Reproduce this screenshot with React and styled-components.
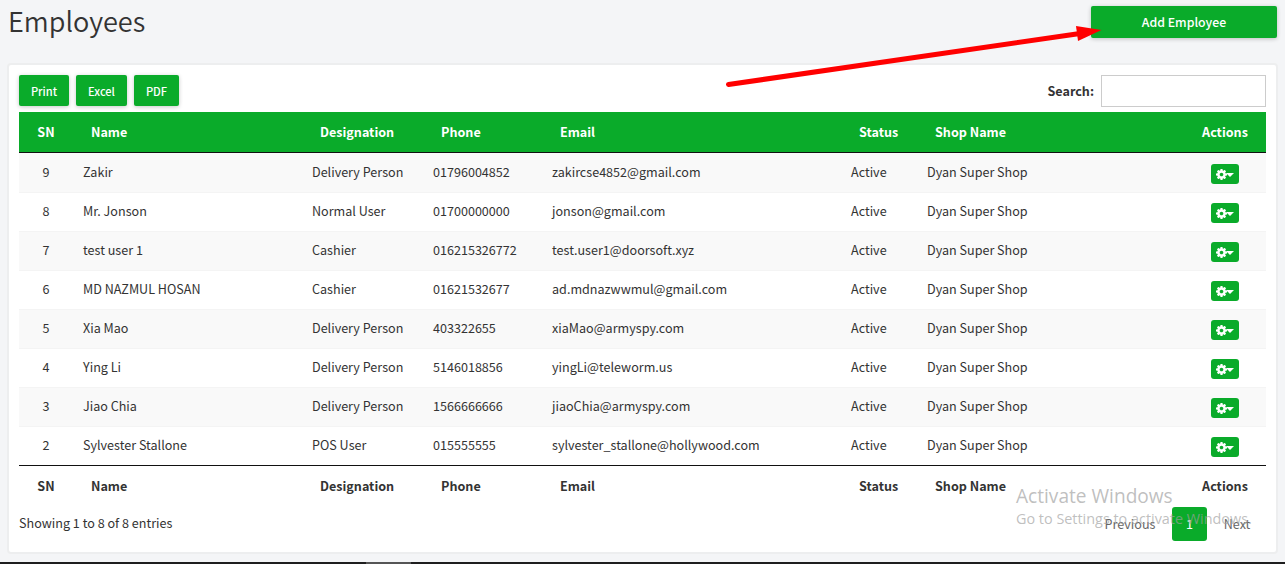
import React from "react";
import styled, { createGlobalStyle } from "styled-components";

const green = "#0aab2a";

const GlobalStyle = createGlobalStyle`
  *, *::before, *::after { box-sizing: border-box; }
  body {
    margin: 0;
    overflow: hidden;
    background: #f4f5f7;
    color: #333;
    font-family: "Noto Sans CJK JP", "Noto Sans", sans-serif;
    font-size: 12.58px;
    line-height: 20px;
  }
`;

const Page = styled.div`
  position: relative;
  display: flex;
  flex-direction: column;
  height: 564px;
`;

const Header = styled.header`
  display: flex;
  justify-content: space-between;
  align-items: flex-start;
  height: 63px;
  padding: 6px 8px 0 8px;
`;

const Title = styled.h1`
  margin: -2px 0 0;
  font-size: 27.1px;
  font-weight: 350;
  line-height: 34px;
  white-space: nowrap;
`;

const Button = styled.button`
  border: 0;
  padding: 0;
  border-radius: 2px;
  background: ${green};
  color: #fff;
  font-family: inherit;
  font-size: ${(p) => p.$size || "11.1px"};
  font-weight: 500;
  line-height: ${(p) => p.$height}px;
  width: ${(p) => p.$width}px;
  height: ${(p) => p.$height}px;
  box-shadow: 0 1px 4px rgba(0, 0, 0, 0.22);
`;

const ExportButton = styled(Button)`
  padding-top: 1px;
  line-height: 30px;
`;

const Card = styled.main`
  display: flex;
  flex-direction: column;
  height: 491px;
  margin: 0 7px;
  padding: 10px 10px 0;
  border: 2px solid #edeeef;
  border-radius: 4px;
  background: #fff;
`;

const Toolbar = styled.div`
  display: flex;
  justify-content: space-between;
  align-items: flex-start;
  height: 37px;
`;

const ButtonGroup = styled.div`
  display: flex;
  gap: 7px;
`;

const Search = styled.label`
  display: flex;
  align-items: center;
  gap: 7px;
  font-weight: 700;
`;

const SearchInput = styled.input`
  width: 165px;
  height: 32px;
  padding: 5px;
  border: 1px solid #ccc;
  background: #fff;
  outline: 0;
`;

const Table = styled.table`
  width: 1247px;
  border-collapse: separate;
  border-spacing: 0;
  table-layout: fixed;
`;

const HeadCell = styled.th`
  height: 41px;
  padding: ${(p) => (p.$center ? "0" : "0 16px")};
  border-bottom: 1px solid #111;
  background: ${green};
  color: #fff;
  font-weight: 700;
  text-align: ${(p) => (p.$center ? "center" : "left")};

  &:first-child {
    padding-right: 2px;
  }
`;

const FootCell = styled.th`
  height: 42px;
  padding: ${(p) => (p.$center ? "0 0 2px" : "0 16px 2px")};
  border-top: 1px solid #111;
  font-weight: 700;
  text-align: ${(p) => (p.$center ? "center" : "left")};

  &:first-child {
    padding-right: 2px;
  }
`;

const Row = styled.tr`
  background: ${(p) => (p.$odd ? "#f9f9f9" : "#fff")};
`;

const Cell = styled.td`
  height: 39px;
  padding: 0 8px 2px;
  border-top: 1px solid ${(p) => (p.$first ? "#f9f9f9" : "#f4f4f4")};
  text-align: ${(p) => (p.$center ? "center" : "left")};
  white-space: nowrap;

  &:first-child {
    padding-right: 10px;
  }
`;

const ActionButton = styled.button`
  display: flex;
  align-items: center;
  width: 28px;
  height: 20px;
  margin: 4px auto 0;
  padding: 0 5px;
  border: 0;
  border-radius: 3px;
  background: ${green};
  color: #fff;
`;

const Caret = styled.span`
  border: 4px solid transparent;
  border-top-color: #fff;
  border-bottom: 0;
  margin: 1px 0 0 -1px;
`;

const Footer = styled.footer`
  display: flex;
  justify-content: space-between;
  align-items: flex-start;
`;

const Info = styled.div`
  padding-top: 6px;
`;

const Pagination = styled.nav`
  display: flex;
  gap: 1px;
`;

const PageLink = styled.a`
  height: 34px;
  width: ${(p) => p.$width}px;
  border-radius: 3px;
  background: ${(p) => (p.$active ? green : "transparent")};
  color: ${(p) => (p.$active ? "#fff" : "#666")};
  line-height: 34px;
  text-align: center;
`;

const Arrow = styled.svg`
  position: absolute;
  left: 720px;
  top: 18px;
  pointer-events: none;
`;

const Watermark = styled.div`
  position: absolute;
  left: 1016px;
  top: 483px;
  color: rgba(160, 160, 160, 0.68);
  font-family: "Open Sans", "Noto Sans", sans-serif;
  font-weight: 400;
  white-space: nowrap;
  pointer-events: none;
`;

const WatermarkTitle = styled.div`
  font-size: 19.1px;
  line-height: 26px;
`;

const WatermarkText = styled.div`
  font-size: 14.4px;
  line-height: 19px;
`;

const Taskbar = styled.div`
  flex: 0 0 2px;
  margin-top: auto;
  padding-left: 366px;
  background: #1e1e1e;
`;

const TaskbarItem = styled.div`
  width: 45px;
  height: 2px;
  background: #555;
`;

const Gear = () => (
  <svg width="11" height="11" viewBox="0 128 1536 1536" fill="currentColor">
    <path d="M1024 896q0-106-75-181t-181-75-181 75-75 181 75 181 181 75 181-75 75-181zm512-109v222q0 12-8 23t-20 13l-185 28q-19 54-39 91 35 50 107 138 10 12 10 25t-9 23q-27 37-99 108t-94 71q-12 0-26-9l-138-108q-44 23-91 38-16 136-29 186-7 28-36 28h-222q-14 0-24.500-8.500t-11.500-21.500l-28-184q-49-16-90-37l-141 107q-10 9-25 9-14 0-25-11-126-114-165-168-7-10-7-23 0-12 8-23 15-21 51-66.500t54-70.500q-27-50-41-99l-183-27q-13-2-21-12.500t-8-23.500v-222q0-12 8-23t19-13l186-28q14-46 39-92-40-57-107-138-10-12-10-24 0-10 9-23 26-36 98.500-107.500t94.500-71.500q13 0 26 10l138 107q44-23 91-38 16-136 29-186 7-28 36-28h222q14 0 24.500 8.500t11.500 21.500l28 184q49 16 90 37l142-107q9-9 24-9 13 0 25 10 129 119 165 170 7 8 7 22 0 12-8 23-15 21-51 66.500t-54 70.500q26 50 41 98l183 28q13 2 21 12.500t8 23.500z" />
  </svg>
);

const columns = [
  { label: "SN", width: 56, center: true },
  { label: "Name", width: 229 },
  { label: "Designation", width: 121 },
  { label: "Phone", width: 119 },
  { label: "Email", width: 299 },
  { label: "Status", width: 76 },
  { label: "Shop Name", width: 265 },
  { label: "Actions", width: 82, center: true },
];

const employees = [
  [9, "Zakir", "Delivery Person", "01796004852", "zakircse4852@gmail.com"],
  [8, "Mr. Jonson", "Normal User", "01700000000", "jonson@gmail.com"],
  [7, "test user 1", "Cashier", "016215326772", "test.user1@doorsoft.xyz"],
  [6, "MD NAZMUL HOSAN", "Cashier", "01621532677", "ad.mdnazwwmul@gmail.com"],
  [5, "Xia Mao", "Delivery Person", "403322655", "xiaMao@armyspy.com"],
  [4, "Ying Li", "Delivery Person", "5146018856", "yingLi@teleworm.us"],
  [3, "Jiao Chia", "Delivery Person", "1566666666", "jiaoChia@armyspy.com"],
  [2, "Sylvester Stallone", "POS User", "015555555", "sylvester_stallone@hollywood.com"],
];

export default function App() {
  return (
    <Page>
      <GlobalStyle />
      <Header>
        <Title>Employees</Title>
        <Button $width={186} $height={32} $size="12.3px">Add Employee</Button>
      </Header>
      <Card>
        <Toolbar>
          <ButtonGroup>
            <ExportButton $width={50} $height={31}>Print</ExportButton>
            <ExportButton $width={51} $height={31}>Excel</ExportButton>
            <ExportButton $width={45} $height={31}>PDF</ExportButton>
          </ButtonGroup>
          <Search>
            Search:
            <SearchInput type="search" />
          </Search>
        </Toolbar>
        <Table>
          <colgroup>
            {columns.map((c) => (
              <col key={c.label} width={c.width} />
            ))}
          </colgroup>
          <thead>
            <tr>
              {columns.map((c) => (
                <HeadCell key={c.label} $center={c.center}>{c.label}</HeadCell>
              ))}
            </tr>
          </thead>
          <tbody>
            {employees.map(([sn, name, role, phone, email], i) => {
              const first = i === 0;
              return (
                <Row key={sn} $odd={i % 2 === 0}>
                  <Cell $first={first} $center>{sn}</Cell>
                  <Cell $first={first}>{name}</Cell>
                  <Cell $first={first}>{role}</Cell>
                  <Cell $first={first}>{phone}</Cell>
                  <Cell $first={first}>{email}</Cell>
                  <Cell $first={first}>Active</Cell>
                  <Cell $first={first}>Dyan Super Shop</Cell>
                  <Cell $first={first} $center>
                    <ActionButton aria-label="Actions">
                      <Gear />
                      <Caret />
                    </ActionButton>
                  </Cell>
                </Row>
              );
            })}
          </tbody>
          <tfoot>
            <tr>
              {columns.map((c) => (
                <FootCell key={c.label} $center={c.center}>{c.label}</FootCell>
              ))}
            </tr>
          </tfoot>
        </Table>
        <Footer>
          <Info>Showing 1 to 8 of 8 entries</Info>
          <Pagination>
            <PageLink $width={82}>Previous</PageLink>
            <PageLink $width={35} $active>1</PageLink>
            <PageLink $width={58}>Next</PageLink>
          </Pagination>
        </Footer>
      </Card>
      <Taskbar>
        <TaskbarItem />
      </Taskbar>
      <Arrow width="385" height="74" viewBox="720 18 385 74">
        <path d="M728.500 84.500L1080 33.500" stroke="#f00" strokeWidth="5" strokeLinecap="round" fill="none" />
        <path d="M1101.500 30L1076 26L1078 41Z" fill="#f00" />
      </Arrow>
      <Watermark>
        <WatermarkTitle>Activate Windows</WatermarkTitle>
        <WatermarkText>Go to Settings to activate Windows.</WatermarkText>
      </Watermark>
    </Page>
  );
}
